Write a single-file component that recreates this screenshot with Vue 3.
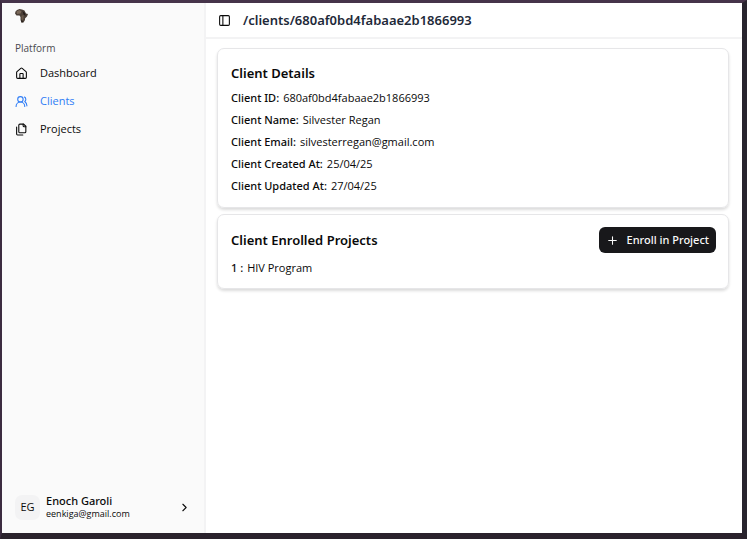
<script setup>
import { ref } from 'vue'

const collapsed = ref(false)
const nav = [
  { label: 'Dashboard', icon: 'home', active: false },
  { label: 'Clients', icon: 'users', active: true },
  { label: 'Projects', icon: 'files', active: false },
]
const details = [
  ['Client ID:', '680af0bd4fabaae2b1866993'],
  ['Client Name:', 'Silvester Regan'],
  ['Client Email:', 'silvesterregan@gmail.com'],
  ['Client Created At:', '25/04/25'],
  ['Client Updated At:', '27/04/25'],
]
const projects = ['HIV Program']
</script>

<template>
  <div class="frame">
    <div class="app">
      <aside v-if="!collapsed" class="sidebar">
        <a href="#" class="brand" aria-label="Home">
          <svg width="13" height="14" viewBox="0 0 26 28">
            <path d="M4 2 L9 0 L14 1 L19 3 L22 9 L26 10 L24 15 L20 19 L20 22 L17 27 L13 27 L11 22 L11 16 L9 13 L3 13 L0 9 L1 5 Z" fill="#4c4038" />
            <path d="M3 5 L9 2 L13 5 L11 9 L4 10 Z" fill="#7a695a" />
            <path d="M13 14 L17 12 L17 20 L14 24 Z" fill="#6b5b4d" />
            <path d="M15 4 L20 8 L21 14 L17 11 Z M12 22 L16 24 L15 27 L13 27 Z" fill="#241d1a" />
          </svg>
        </a>
        <p class="group">Platform</p>
        <nav>
          <a v-for="item in nav" :key="item.label" href="#" class="link" :class="{ active: item.active }">
            <svg class="icon" viewBox="0 0 24 24">
              <template v-if="item.icon === 'home'">
                <path d="M15 21v-8a1 1 0 0 0-1-1h-4a1 1 0 0 0-1 1v8" />
                <path d="M3 10a2 2 0 0 1 .709-1.528l7-5.999a2 2 0 0 1 2.582 0l7 5.999A2 2 0 0 1 21 10v9a2 2 0 0 1-2 2H5a2 2 0 0 1-2-2z" />
              </template>
              <template v-else-if="item.icon === 'users'">
                <path d="M18 21a8 8 0 0 0-16 0" />
                <circle cx="10" cy="8" r="5" />
                <path d="M22 20c0-3.37-2-6.5-4-8a5 5 0 0 0-.45-8.3" />
              </template>
              <template v-else>
                <path d="M20 7h-3a2 2 0 0 1-2-2V2" />
                <path d="M9 18a2 2 0 0 1-2-2V4a2 2 0 0 1 2-2h7l4 4v10a2 2 0 0 1-2 2Z" />
                <path d="M3 7.6v12.8A1.6 1.6 0 0 0 4.6 22h9.8" />
              </template>
            </svg>
            <span>{{ item.label }}</span>
          </a>
        </nav>
        <button type="button" class="user">
          <span class="avatar">EG</span>
          <span class="who">
            <span class="name">Enoch Garoli</span>
            <span class="mail">eenkiga@gmail.com</span>
          </span>
          <svg class="icon" viewBox="0 0 24 24"><path d="m9 18 6-6-6-6" /></svg>
        </button>
      </aside>

      <div class="page">
        <header class="topbar">
          <button type="button" class="toggle" aria-label="Toggle sidebar" @click="collapsed = !collapsed">
            <svg class="icon" viewBox="0 0 24 24">
              <rect x="3" y="3" width="18" height="18" rx="2" />
              <path d="M9 3v18" />
            </svg>
          </button>
          <h1>/clients/680af0bd4fabaae2b1866993</h1>
        </header>

        <main class="content">
          <section class="card">
            <h2>Client Details</h2>
            <dl class="details">
              <div v-for="[label, value] in details" :key="label" class="row">
                <dt>{{ label }}</dt>
                <dd>{{ value }}</dd>
              </div>
            </dl>
          </section>

          <section class="card projects">
            <div class="card-head">
              <h2>Client Enrolled Projects</h2>
              <button type="button" class="enroll">
                <svg class="icon" viewBox="0 0 24 24"><path d="M5 12h14M12 5v14" /></svg>
                Enroll in Project
              </button>
            </div>
            <div v-for="(project, i) in projects" :key="project" class="row">
              <span class="index">{{ i + 1 }} :</span>
              <span>{{ project }}</span>
            </div>
          </section>
        </main>
      </div>
    </div>
  </div>
</template>

<style>
body {
  margin: 0;
}
</style>

<style scoped>
.frame {
  box-sizing: border-box;
  min-height: 100vh;
  display: flex;
  border-style: solid;
  border-width: 3px 5px 6px 2px;
  border-color: #46344a #28242e #2a222c #3c2c40;
  font-family: "Open Sans", "Noto Sans", sans-serif;
  font-size: 11px;
  line-height: 16px;
  color: #0a0a0a;
}
.app {
  flex: 1;
  display: flex;
  background: #fff;
}
h1, h2, p, dl, dd {
  margin: 0;
}
button {
  font: inherit;
  color: inherit;
  border: 0;
  padding: 0;
  background: none;
  cursor: pointer;
}
a {
  color: inherit;
  text-decoration: none;
}
.icon {
  width: 13px;
  height: 13px;
  flex: none;
  fill: none;
  stroke: currentColor;
  stroke-width: 2;
  stroke-linecap: round;
  stroke-linejoin: round;
}
.sidebar {
  box-sizing: border-box;
  width: 204px;
  flex: none;
  display: flex;
  flex-direction: column;
  background: #fafafa;
  border-right: 2px solid #f3f3f4;
}
.brand {
  display: flex;
  padding: 6px 13px;
}
.group {
  padding: 11px 13px 3px;
  font-size: 10px;
  line-height: 16px;
  color: #4a4a4f;
}
.link {
  display: flex;
  align-items: center;
  gap: 12px;
  height: 28px;
  padding: 0 13px;
}
.active {
  color: #2f7df6;
}
.user {
  display: flex;
  align-items: center;
  gap: 6px;
  margin-top: auto;
  padding: 13px;
  text-align: left;
}
.avatar {
  width: 25px;
  height: 25px;
  line-height: 24px;
  border-radius: 7px;
  background: #f3f3f4;
  text-align: center;
}
.who {
  flex: 1;
  display: grid;
  line-height: 13px;
}
.name, dt, .index, h1, h2, .enroll {
  font-family: "Noto Sans", "Open Sans", sans-serif;
  font-weight: 500;
}
.mail {
  font-size: 9px;
}
.page {
  flex: 1;
  min-width: 0;
}
.topbar {
  display: flex;
  align-items: center;
  gap: 12px;
  height: 34px;
  padding: 0 12px;
  border-bottom: 2px solid #f3f3f4;
}
.toggle {
  display: flex;
}
h1 {
  font-size: 13px;
  font-weight: 600;
  color: #1e2939;
}
h2 {
  font-size: 13px;
  line-height: 20px;
  font-weight: 600;
}
.content {
  display: grid;
  gap: 6px;
  padding: 9px 13px 9px 11px;
}
.card {
  padding: 14px 12px 10px 13px;
  border: 1px solid #e6e6e8;
  border-radius: 7px;
  box-shadow: 0 2px 3px rgba(0, 0, 0, 0.14);
}
.projects {
  padding-top: 12px;
  padding-bottom: 9px;
}
.details {
  padding-top: 4px;
}
.row {
  display: flex;
  align-items: center;
  gap: 4px;
  height: 22px;
}
.card-head {
  display: flex;
  align-items: center;
  justify-content: space-between;
  padding-bottom: 4px;
}
.enroll {
  display: flex;
  align-items: center;
  gap: 8px;
  height: 26px;
  padding: 0 7px;
  border-radius: 6px;
  background: #18181b;
  color: #fafafa;
}
</style>
